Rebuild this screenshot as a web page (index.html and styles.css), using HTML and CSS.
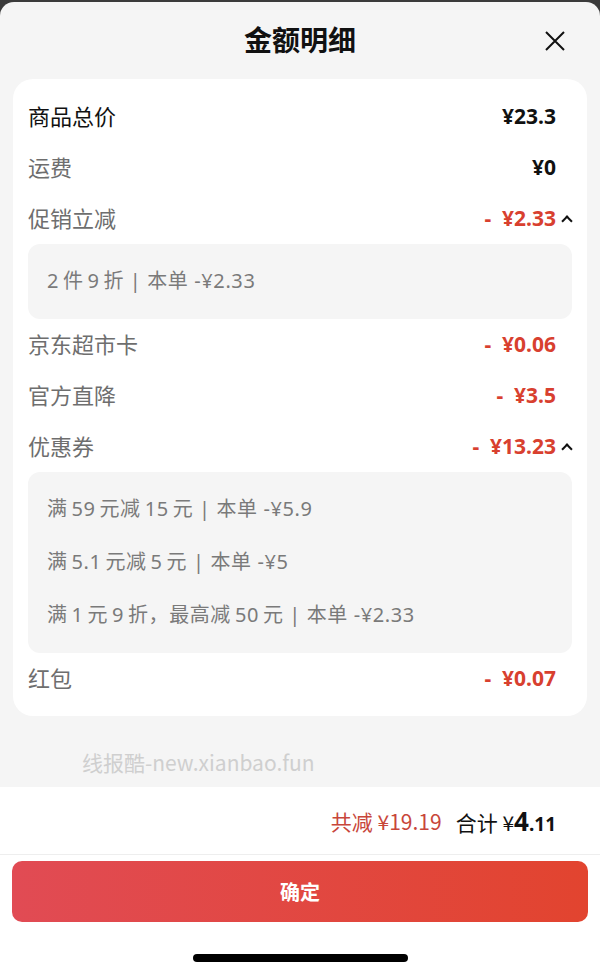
FILE: index.html
```html
<!DOCTYPE html>
<html lang="zh-CN">
<head>
    <meta charset="UTF-8">
    <meta name="viewport" content="width=device-width, initial-scale=1.0">
    <title>金额明细</title>
    <link rel="stylesheet" href="styles.css">
</head>
<body>

    <div class="sheet">

        <div class="header">
            <h1 class="title">金额明细</h1>
            <span class="close">
                <svg width="20" height="20" viewBox="0 0 20 20"><path d="M1 1 L19 19 M19 1 L1 19" stroke="#111" stroke-width="2" fill="none"/></svg>
            </span>
        </div>

        <div class="card">
            <div class="row">
                <span class="label strong">商品总价</span>
                <span class="value">¥23.3</span>
            </div>
            <div class="row">
                <span class="label">运费</span>
                <span class="value">¥0</span>
            </div>
            <div class="row">
                <span class="label">促销立减</span>
                <span class="value red">-&nbsp;&nbsp;¥2.33<i class="caret"></i></span>
            </div>
            <div class="detail">
                <p>2&#8201;件&#8201;9&#8201;折 | 本单 -¥2.33</p>
            </div>
            <div class="row">
                <span class="label">京东超市卡</span>
                <span class="value red">-&nbsp;&nbsp;¥0.06</span>
            </div>
            <div class="row">
                <span class="label">官方直降</span>
                <span class="value red">-&nbsp;&nbsp;¥3.5</span>
            </div>
            <div class="row">
                <span class="label">优惠券</span>
                <span class="value red">-&nbsp;&nbsp;¥13.23<i class="caret"></i></span>
            </div>
            <div class="detail">
                <p>满&#8201;59&#8201;元减&#8201;15&#8201;元 | 本单 -¥5.9</p>
                <p>满&#8201;5.1&#8201;元减&#8201;5&#8201;元 | 本单 -¥5</p>
                <p>满&#8201;1&#8201;元&#8201;9&#8201;折，最高减&#8201;50&#8201;元 | 本单 -¥2.33</p>
            </div>
            <div class="row">
                <span class="label">红包</span>
                <span class="value red">-&nbsp;&nbsp;¥0.07</span>
            </div>
        </div>

        <div class="mark">线报酷-new.xianbao.fun</div>

        <div class="footer">
            <div class="total">
                <span class="saved">共减 ¥19.19</span>
                <span class="sum">合计 ¥<b class="big">4</b><b class="small">.11</b></span>
            </div>
            <button class="confirm">确定</button>
            <div class="home"></div>
        </div>

    </div>

</body>
</html>
```

FILE: styles.css
```css
body{
    margin: 0;
    background: #3b3b3b;
    font-family: "Noto Sans CJK SC", "Noto Sans", sans-serif;
    overflow: hidden;
}

.sheet{
    margin-top: 2px;
    height: 973px;
    background: #f5f5f5;
    border-radius: 14px 14px 0 0;
    display: flex;
    flex-direction: column;
}

.header{
    height: 77px;
    display: flex;
    justify-content: center;
    align-items: center;
    position: relative;
}

.title{
    margin: 0;
    font-size: 28px;
    font-weight: 700;
    color: #111;
    margin-top: -3px;
}

.close{
    position: absolute;
    right: 35px;
    top: 29px;
    width: 20px;
    height: 20px;
}

.card{
    margin: 0 13px;
    background: #fff;
    border-radius: 20px;
    padding: 12px 15px 12px 15px;
}

.row{
    height: 51px;
    display: flex;
    justify-content: space-between;
    align-items: center;
}

.label{
    font-size: 22px;
    color: #6e6e6e;
    margin-top: -3px;
}

.label.strong{
    color: #111;
}

.value{
    font-family: "Noto Sans", Roboto, sans-serif;
    font-size: 21px;
    font-weight: 700;
    color: #111;
    margin-right: 16px;
    margin-top: -1px;
    position: relative;
}

.value.red{
    color: #d8402f;
}

.caret{
    position: absolute;
    right: -15px;
    top: 13px;
    width: 6px;
    height: 6px;
    border-left: 2px solid #111;
    border-top: 2px solid #111;
    transform: rotate(45deg);
}

.detail{
    background: #f5f5f5;
    border-radius: 12px;
    padding: 11px 19px;
}

.detail p{
    margin: 0;
    height: 53px;
    line-height: 51px;
    font-family: "Noto Sans", "Noto Sans CJK SC", sans-serif;
    font-size: 20px;
    letter-spacing: 0.6px;
    color: #7a7a7a;
}

.mark{
    height: 71px;
    padding-left: 82px;
    line-height: 92px;
    font-size: 21px;
    color: #cfcfcf;
}

.footer{
    flex: 1;
    background: #fff;
    display: flex;
    flex-direction: column;
}

.total{
    height: 67px;
    border-bottom: 1px solid #eeeeee;
    display: flex;
    justify-content: flex-end;
    align-items: center;
    padding-right: 44px;
    gap: 14px;
}

.saved{
    font-size: 21px;
    color: #c8463a;
}

.sum{
    font-size: 21px;
    color: #111;
}

.big{
    font-family: "Noto Sans", Roboto, sans-serif;
    font-size: 26px;
}

.small{
    font-family: "Noto Sans", Roboto, sans-serif;
    font-size: 19px;
}

.confirm{
    margin: 6px 12px 0 12px;
    height: 61px;
    border: none;
    border-radius: 10px;
    background: linear-gradient(to right, #e14b54, #e2442f);
    color: #fff;
    font-family: "Noto Sans CJK SC", sans-serif;
    font-size: 20px;
    font-weight: 700;
}

.home{
    width: 215px;
    height: 8px;
    border-radius: 4px;
    background: #000;
    margin: 32px auto 0 auto;
}
```
